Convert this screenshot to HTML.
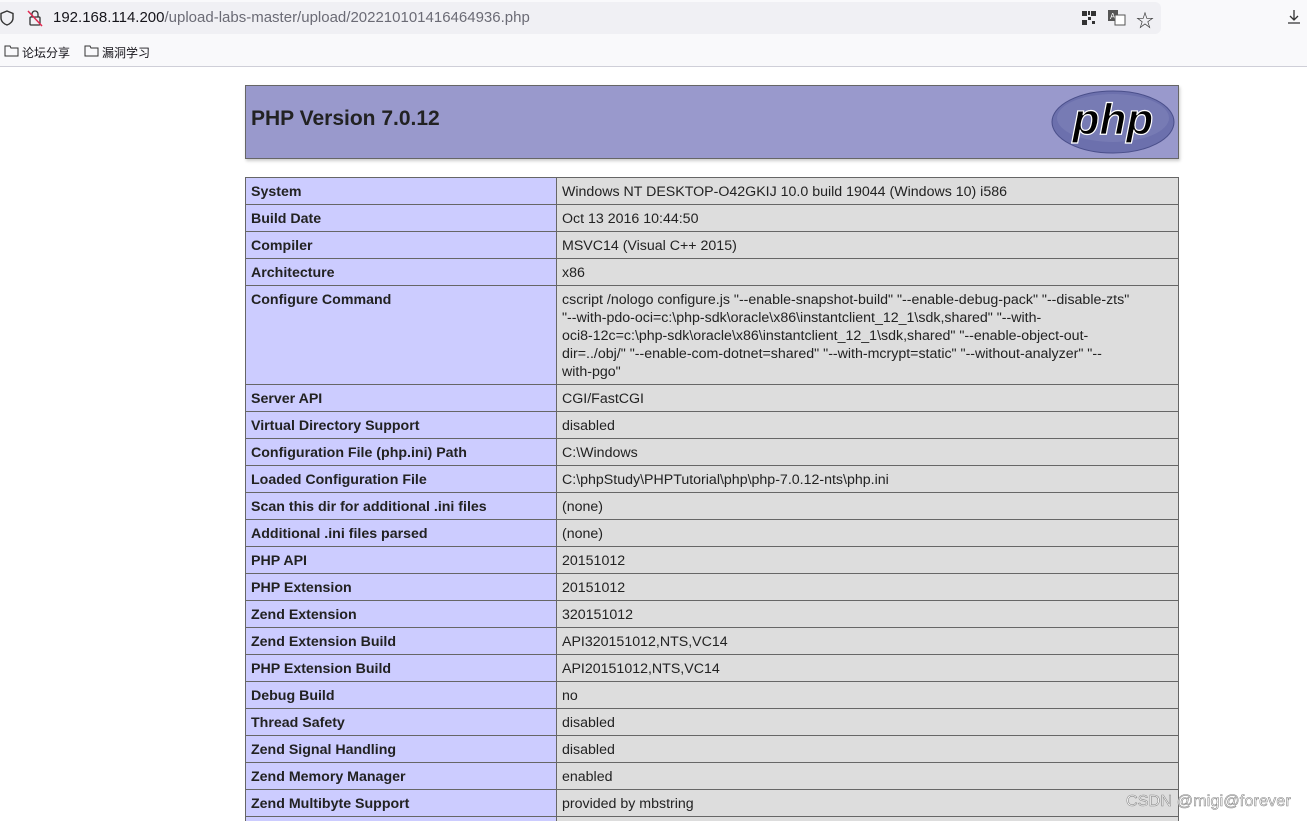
<!DOCTYPE html>
<html><head><meta charset="utf-8"><style>
*{margin:0;padding:0;box-sizing:border-box}
html,body{width:1307px;height:821px;overflow:hidden}
body{background:#fff;font-family:"Liberation Sans","Noto Sans CJK SC",sans-serif;position:relative}
.top{position:absolute;left:0;top:0;width:1307px;height:67px;background:#f9f9fb;border-bottom:1px solid #cfcfd8}
.url{position:absolute;left:0;top:2px;width:1161px;height:32px;background:#f0f0f4;border-radius:0 6px 6px 0}
.urltext{position:absolute;left:53px;top:9px;font-size:15px;color:#15141a;white-space:nowrap}
.urltext span{color:#6b6b75}
.bm{position:absolute;top:44px;font-size:12px;color:#15141a}
.hdr{position:absolute;left:245px;top:85px;width:934px;height:74px;background:#9999cc;border:1px solid #666;box-shadow:1px 2px 3px #ccc}
.hdr h1{position:absolute;left:5px;top:21px;font-size:21px;font-weight:bold;color:#222}
.row{position:absolute;left:245px;width:934px;border:1px solid #666;border-bottom:none;font-size:14.2px;color:#222}
.e{position:absolute;left:0;top:0;bottom:0;width:311px;background:#ccccff;font-weight:bold;padding:5px 5px;border-right:1px solid #666;line-height:18px;white-space:nowrap}
.v{position:absolute;left:311px;top:0;bottom:0;right:0;background:#dddddd;padding:5px 5px;line-height:18px}
.wm{position:absolute;left:1126px;top:793px;font-size:16px;color:#fff;-webkit-text-stroke:0.6px #888;letter-spacing:0.2px}
</style></head><body>
<div class="top">
 <div class="url"></div>
 <svg style="position:absolute;left:0;top:10px" width="14" height="16" viewBox="0 0 14 16"><path d="M7 1 L13 3.5 V8 C13 11.5 10 14 7 15 C4 14 1 11.5 1 8 V3.5 Z" fill="none" stroke="#333" stroke-width="1.4"/></svg>
 <svg style="position:absolute;left:27px;top:9px" width="16" height="18" viewBox="0 0 16 18"><path d="M5 8 V5 a3 3 0 0 1 6 0 V8" fill="none" stroke="#333" stroke-width="1.3"/><rect x="3" y="8" width="10" height="8" rx="1" fill="none" stroke="#333" stroke-width="1.3"/><line x1="1" y1="2" x2="15" y2="17" stroke="#e22850" stroke-width="1.5"/></svg>
 <div class="urltext">192.168.114.200<span>/upload-labs-master/upload/202210101416464936.php</span></div>
 <svg style="position:absolute;left:1082px;top:11px" width="14" height="14" viewBox="0 0 14 14" fill="#333"><rect x="0" y="0" width="5" height="5"/><rect x="9" y="0" width="5" height="5"/><rect x="0" y="9" width="5" height="5"/><rect x="6" y="6" width="3" height="3"/><rect x="10" y="10" width="3" height="3"/><rect x="6" y="0" width="2" height="4"/></svg>
 <svg style="position:absolute;left:1108px;top:10px" width="18" height="16" viewBox="0 0 18 16"><rect x="0" y="0" width="10" height="11" fill="#555"/><text x="2" y="9" font-size="8" fill="#fff" font-family="Liberation Sans">A</text><rect x="7" y="5" width="10" height="10" fill="#fff" stroke="#555"/></svg>
 <div style="position:absolute;left:1136px;top:7px;font-size:18px;color:#333">☆</div>
 <svg style="position:absolute;left:1287px;top:9px" width="14" height="16" viewBox="0 0 14 16"><path d="M7 1 V11 M3 7 L7 11 L11 7 M1 14 H13" fill="none" stroke="#333" stroke-width="1.3"/></svg>
 <svg style="position:absolute;left:4px;top:45px" width="15" height="12" viewBox="0 0 15 12"><path d="M1 1 H6 L7 3 H14 V11 H1 Z" fill="none" stroke="#333"/></svg>
 <div class="bm" style="left:22px">论坛分享</div>
 <svg style="position:absolute;left:84px;top:45px" width="15" height="12" viewBox="0 0 15 12"><path d="M1 1 H6 L7 3 H14 V11 H1 Z" fill="none" stroke="#333"/></svg>
 <div class="bm" style="left:102px">漏洞学习</div>
</div>
<div class="hdr"><h1>PHP Version 7.0.12</h1>
<svg style="position:absolute;left:805px;top:4px" width="124" height="64" viewBox="0 0 124 64"><ellipse cx="62" cy="32" rx="61" ry="31" fill="#6c70ad" stroke="#4a4f8a"/><ellipse cx="62" cy="28" rx="56" ry="24" fill="#777bb4"/><text x="62" y="44" text-anchor="middle" font-family="Liberation Sans" font-style="italic" font-weight="bold" font-size="44" fill="#000" stroke="#fff" stroke-width="1.2">php</text></svg>
</div>
<div class="row" style="top:177px;height:27px"><div class="e">System</div><div class="v">Windows NT DESKTOP-O42GKIJ 10.0 build 19044 (Windows 10) i586</div></div>
<div class="row" style="top:204px;height:27px"><div class="e">Build Date</div><div class="v">Oct 13 2016 10:44:50</div></div>
<div class="row" style="top:231px;height:27px"><div class="e">Compiler</div><div class="v">MSVC14 (Visual C++ 2015)</div></div>
<div class="row" style="top:258px;height:27px"><div class="e">Architecture</div><div class="v">x86</div></div>
<div class="row" style="top:285px;height:99px"><div class="e">Configure Command</div><div class="v" style="white-space:nowrap">cscript /nologo configure.js "--enable-snapshot-build" "--enable-debug-pack" "--disable-zts"<br>"--with-pdo-oci=c:\php-sdk\oracle\x86\instantclient_12_1\sdk,shared" "--with-<br>oci8-12c=c:\php-sdk\oracle\x86\instantclient_12_1\sdk,shared" "--enable-object-out-<br>dir=../obj/" "--enable-com-dotnet=shared" "--with-mcrypt=static" "--without-analyzer" "--<br>with-pgo"</div></div>
<div class="row" style="top:384px;height:27px"><div class="e">Server API</div><div class="v">CGI/FastCGI</div></div>
<div class="row" style="top:411px;height:27px"><div class="e">Virtual Directory Support</div><div class="v">disabled</div></div>
<div class="row" style="top:438px;height:27px"><div class="e">Configuration File (php.ini) Path</div><div class="v">C:\Windows</div></div>
<div class="row" style="top:465px;height:27px"><div class="e">Loaded Configuration File</div><div class="v">C:\phpStudy\PHPTutorial\php\php-7.0.12-nts\php.ini</div></div>
<div class="row" style="top:492px;height:27px"><div class="e">Scan this dir for additional .ini files</div><div class="v">(none)</div></div>
<div class="row" style="top:519px;height:27px"><div class="e">Additional .ini files parsed</div><div class="v">(none)</div></div>
<div class="row" style="top:546px;height:27px"><div class="e">PHP API</div><div class="v">20151012</div></div>
<div class="row" style="top:573px;height:27px"><div class="e">PHP Extension</div><div class="v">20151012</div></div>
<div class="row" style="top:600px;height:27px"><div class="e">Zend Extension</div><div class="v">320151012</div></div>
<div class="row" style="top:627px;height:27px"><div class="e">Zend Extension Build</div><div class="v">API320151012,NTS,VC14</div></div>
<div class="row" style="top:654px;height:27px"><div class="e">PHP Extension Build</div><div class="v">API20151012,NTS,VC14</div></div>
<div class="row" style="top:681px;height:27px"><div class="e">Debug Build</div><div class="v">no</div></div>
<div class="row" style="top:708px;height:27px"><div class="e">Thread Safety</div><div class="v">disabled</div></div>
<div class="row" style="top:735px;height:27px"><div class="e">Zend Signal Handling</div><div class="v">disabled</div></div>
<div class="row" style="top:762px;height:27px"><div class="e">Zend Memory Manager</div><div class="v">enabled</div></div>
<div class="row" style="top:789px;height:27px"><div class="e">Zend Multibyte Support</div><div class="v">provided by mbstring</div></div>
<div class="row" style="top:816px;height:5px"><div class="e"></div><div class="v"></div></div>
<div class="wm">CSDN @migi@forever</div>
</body></html>
